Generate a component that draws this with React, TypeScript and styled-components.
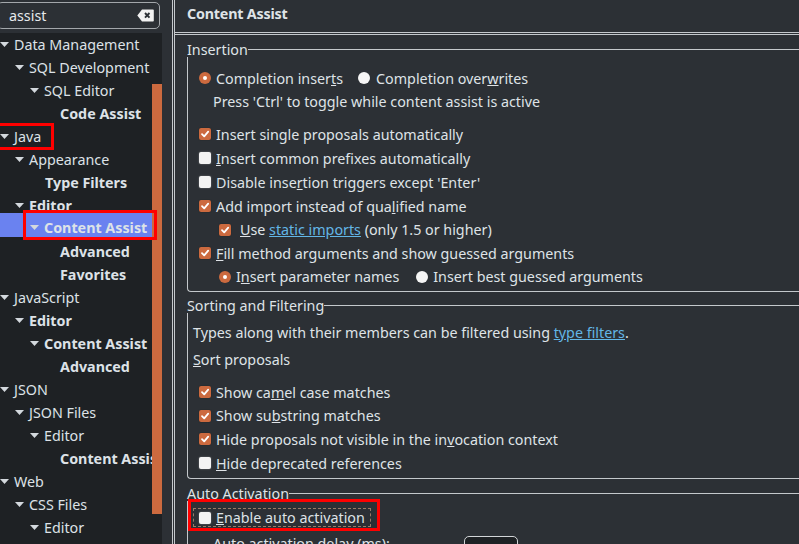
import React from 'react';
import styled, { createGlobalStyle } from 'styled-components';

const Global = createGlobalStyle`
  html, body { margin: 0; padding: 0; background: #2c3035; }
  body {
    font-family: "Noto Sans", "DejaVu Sans", sans-serif;
    font-size: 14.3px;
    color: #dfe3e7;
    overflow: hidden;
  }
  * { box-sizing: border-box; }
`;

const ORANGE = '#cc6a3f';
const LINE = '#c4c8cc';

const Window = styled.div`
  display: flex;
  width: 799px;
  height: 544px;
  overflow: hidden;
  background: #2c3035;
`;

const Sidebar = styled.aside`
  width: 162px;
  flex: none;
  display: flex;
  flex-direction: column;
  overflow: hidden;
`;

const SearchBar = styled.div`
  height: 33px;
  flex: none;
  padding: 2px 2px 4px 0;
  margin-left: -3px;
`;

const SearchBox = styled.div`
  height: 27px;
  border: 1.5px solid #a3a7ab;
  border-radius: 5px;
  display: flex;
  align-items: center;
  padding: 0 5px 1px 11px;
  background: #2c3035;
`;

const SearchText = styled.span`
  flex: 1;
  color: #e6e9ec;
`;

const Tree = styled.div`
  position: relative;
  flex: 1;
  background: #1e2124;
  overflow: hidden;
`;

const TreeRows = styled.div`
  margin-top: -0.5px;
`;

const ScrollThumb = styled.div`
  position: absolute;
  right: 0;
  top: 51px;
  width: 10px;
  height: 430px;
  background: ${ORANGE};
  z-index: 1;
`;

const Row = styled.div<{ $level: number; $selected?: boolean }>`
  height: ${p => (p.$selected ? 24 : 23)}px;
  margin: ${p => (p.$selected ? '-3.5px 0 2.5px' : '0')};
  padding-top: ${p => (p.$selected ? 3 : 0)}px;
  display: flex;
  align-items: center;
  padding-left: ${p => p.$level * 15}px;
  white-space: nowrap;
  background: ${p => (p.$selected ? '#6a82f0' : 'transparent')};
`;

const Mark = styled.span<{ $w: number; $ml: number; $pl: number; $off: number; $tall?: boolean }>`
  display: inline-flex;
  align-items: center;
  align-self: stretch;
  width: ${p => p.$w}px;
  margin-left: ${p => p.$ml}px;
  padding-left: ${p => p.$pl}px;
  margin-top: ${p => (p.$tall ? -3 : 0)}px;
  padding-top: ${p => (p.$tall ? 5 : 0)}px;
  position: relative;
  z-index: 2;
  outline: 3px solid #f00;
  outline-offset: ${p => p.$off}px;
`;

const Twisty = styled.span`
  width: 14px;
  flex: none;
  display: inline-flex;
  align-items: center;
  svg { display: block; }
`;

const Leaf = styled.span`
  width: 15px;
  flex: none;
`;

const TreeLabel = styled.span<{ $bold?: boolean }>`
  font-weight: ${p => (p.$bold ? 700 : 400)};
  color: #dde2e7;
`;

const Main = styled.main`
  flex: 1;
  margin-left: 10px;
  border-left: 3px double ${LINE};
  display: flex;
  flex-direction: column;
  min-width: 0;
`;

const Header = styled.header`
  height: 35px;
  flex: none;
  border-bottom: 3px double ${LINE};
  display: flex;
  align-items: center;
  padding: 0 0 6px 12px;
  font-weight: 700;
  letter-spacing: -0.2px;
`;

const Content = styled.div`
  padding: 6px 0 0 12px;
`;

const Group = styled.section<{ $mt?: number }>`
  margin-top: ${p => p.$mt ?? 0}px;
`;

const GroupTitle = styled.div`
  height: 16px;
  display: flex;
  align-items: center;
`;

const TitleLine = styled.span`
  flex: 1;
  height: 1px;
  background: ${LINE};
  margin-top: 1px;
`;

const GroupBody = styled.div<{ $pt: number; $pb: number }>`
  border-left: 1px solid ${LINE};
  border-bottom: 1px solid ${LINE};
  border-bottom-left-radius: 4px;
  padding: ${p => p.$pt}px 0 ${p => p.$pb}px 0;
`;

const OpenBody = styled.div`
  border-left: 1px solid ${LINE};
`;

const Line = styled.div<{ $h?: number; $indent?: number; $mt?: number }>`
  height: ${p => p.$h ?? 24}px;
  display: flex;
  align-items: center;
  padding-left: ${p => p.$indent ?? 11}px;
  margin-top: ${p => p.$mt ?? 0}px;
  white-space: nowrap;
`;

const Option = styled.span<{ $gap?: number; $mr?: number }>`
  display: inline-flex;
  align-items: center;
  gap: ${p => p.$gap ?? 5}px;
  margin-right: ${p => p.$mr ?? 0}px;
`;

const Box = styled.span<{ $on?: boolean }>`
  width: 12px;
  height: 12px;
  flex: none;
  border-radius: 2px;
  background: ${p => (p.$on ? ORANGE : '#f3f3f3')};
  box-shadow: ${p => (p.$on ? '0 0 1px rgba(0,0,0,.6)' : '0 0 2px rgba(255,255,255,.35)')};
  display: inline-flex;
  align-items: center;
  justify-content: center;
  svg { display: block; }
`;

const Radio = styled.span<{ $on?: boolean }>`
  width: 12px;
  height: 12px;
  flex: none;
  border-radius: 50%;
  background: ${p => (p.$on ? ORANGE : '#f5f5f5')};
  display: inline-flex;
  align-items: center;
  justify-content: center;
  &::after {
    content: '';
    width: 4px;
    height: 4px;
    border-radius: 50%;
    background: ${p => (p.$on ? '#fff' : 'transparent')};
  }
`;

const Link = styled.a`
  color: #63b6e6;
  text-decoration: underline;
`;

const RedFrame = styled.div`
  display: inline-flex;
  border: 3px solid #f00;
  padding: 6px 6px 1px 2px;
  margin-top: -2px;
  position: relative;
  z-index: 2;
`;

const Focus = styled.span`
  display: inline-flex;
  align-items: center;
  gap: 5px;
  height: 19px;
  padding: 0 5px;
  border: 1px dashed #9a7a66;
  white-space: nowrap;
`;

const SpinRow = styled.div`
  height: 24px;
  display: flex;
  align-items: center;
  padding-left: 25px;
  color: #dfe3e7;
`;

const SpinLabel = styled.span`
  width: 251px;
  flex: none;
`;

const Input = styled.span`
  width: 54px;
  height: 28px;
  border: 1px solid #d2d5d8;
  border-radius: 5px;
  background: #1e2124;
  padding: 4px 0 0 8px;
  margin-top: 14px;
`;

const Tri = () => (
  <svg width="9" height="5" viewBox="0 0 9 5">
    <path d="M0 0 H9 L4.5 5 Z" fill="#d3d8dd" />
  </svg>
);

const Check = () => (
  <svg width="10" height="10" viewBox="0 0 10 10">
    <path d="M2 5.2 L4.2 7.4 L8.2 2.6" fill="none" stroke="#fff" strokeWidth="1.8" strokeLinecap="round" strokeLinejoin="round" />
  </svg>
);

const ClearIcon = () => (
  <svg width="17" height="13" viewBox="0 0 17 13">
    <path d="M5 0.5 H16 a0.8 0.8 0 0 1 0.8 0.8 V11.7 a0.8 0.8 0 0 1 -0.8 0.8 H5 L0.3 6.5 Z" fill="#f2f2f2" />
    <path d="M8 4 L12.5 8.7 M12.5 4 L8 8.7" stroke="#2c3035" strokeWidth="1.9" />
  </svg>
);

type TreeNode = {
  label: string;
  level: number;
  exp?: boolean;
  bold?: boolean;
  selected?: boolean;
  flag?: 'java' | 'ca';
};

const treeData: TreeNode[] = [
  { label: 'Data Management', level: 0, exp: true },
  { label: 'SQL Development', level: 1, exp: true },
  { label: 'SQL Editor', level: 2, exp: true },
  { label: 'Code Assist', level: 3, bold: true },
  { label: 'Java', level: 0, exp: true, flag: 'java' },
  { label: 'Appearance', level: 1, exp: true },
  { label: 'Type Filters', level: 2, bold: true },
  { label: 'Editor', level: 1, exp: true, bold: true },
  { label: 'Content Assist', level: 2, exp: true, bold: true, selected: true, flag: 'ca' },
  { label: 'Advanced', level: 3, bold: true },
  { label: 'Favorites', level: 3, bold: true },
  { label: 'JavaScript', level: 0, exp: true },
  { label: 'Editor', level: 1, exp: true, bold: true },
  { label: 'Content Assist', level: 2, exp: true, bold: true },
  { label: 'Advanced', level: 3, bold: true },
  { label: 'JSON', level: 0, exp: true },
  { label: 'JSON Files', level: 1, exp: true },
  { label: 'Editor', level: 2, exp: true },
  { label: 'Content Assist', level: 3, bold: true },
  { label: 'Web', level: 0, exp: true },
  { label: 'CSS Files', level: 1, exp: true },
  { label: 'Editor', level: 2, exp: true },
];

const TreeItem: React.FC<{ n: TreeNode }> = ({ n }) => {
  const inner = (
    <>
      {n.exp ? (
        <Twisty>
          <Tri />
        </Twisty>
      ) : (
        <Leaf />
      )}
      <TreeLabel $bold={n.bold}>{n.label}</TreeLabel>
    </>
  );
  if (n.flag === 'java') {
    return (
      <Row $level={n.level}>
        <Mark $w={58} $ml={-6} $pl={6} $off={-1}>{inner}</Mark>
      </Row>
    );
  }
  if (n.flag === 'ca') {
    return (
      <Row $level={n.level} $selected={n.selected}>
        <Mark $w={128} $ml={-4} $pl={4} $off={0} $tall>{inner}</Mark>
      </Row>
    );
  }
  return <Row $level={n.level} $selected={n.selected}>{inner}</Row>;
};

const CheckLine: React.FC<{ on?: boolean; indent?: number; h?: number; gap?: number; children: React.ReactNode }> = ({ on, indent, h, gap, children }) => (
  <Line $indent={indent} $h={h}>
    <Option $gap={gap}>
      <Box $on={on}>{on && <Check />}</Box>
      <span>{children}</span>
    </Option>
  </Line>
);

export default function App() {
  return (
    <>
      <Global />
      <Window>
        <Sidebar>
          <SearchBar>
            <SearchBox>
              <SearchText>assist</SearchText>
              <ClearIcon />
            </SearchBox>
          </SearchBar>
          <Tree>
            <TreeRows>
              {treeData.map((n, i) => (
                <TreeItem key={i} n={n} />
              ))}
            </TreeRows>
            <ScrollThumb />
          </Tree>
        </Sidebar>
        <Main>
          <Header>Content Assist</Header>
          <Content>
            <Group>
              <GroupTitle>
                <span>Insertion</span>
                <TitleLine />
              </GroupTitle>
              <GroupBody $pt={9} $pb={3}>
                <Line>
                  <Option $mr={15}>
                    <Radio $on />
                    <span>Completion inser<u>t</u>s</span>
                  </Option>
                  <Option $gap={6}>
                    <Radio />
                    <span>Completion over<u>w</u>rites</span>
                  </Option>
                </Line>
                <Line $h={23} $indent={25}>Press 'Ctrl' to toggle while content assist is active</Line>
                <Line $h={9} />
                <CheckLine on>Insert single proposals automatically</CheckLine>
                <CheckLine><u>I</u>nsert common prefixes automatically</CheckLine>
                <CheckLine>Disable inse<u>r</u>tion triggers except 'Enter'</CheckLine>
                <CheckLine on>Add import instead of qua<u>l</u>ified name</CheckLine>
                <CheckLine on indent={31} h={23} gap={9}>
                  <u>U</u>se <Link>static imports</Link> (only 1.5 or higher)
                </CheckLine>
                <CheckLine on><u>F</u>ill method arguments and show guessed arguments</CheckLine>
                <Line $h={23} $indent={31}>
                  <Option $mr={17}>
                    <Radio $on />
                    <span>I<u>n</u>sert parameter names</span>
                  </Option>
                  <Option>
                    <Radio />
                    <span>Insert best guessed arguments</span>
                  </Option>
                </Line>
              </GroupBody>
            </Group>
            <Group $mt={5}>
              <GroupTitle>
                <span>Sorting and Filtering</span>
                <TitleLine />
              </GroupTitle>
              <GroupBody $pt={7} $pb={3}>
                <Line $indent={5}>
                  Types along with their members can be filtered using&nbsp;<Link>type filters</Link>.
                </Line>
                <Line $indent={5} $mt={3}><u>S</u>ort proposals</Line>
                <Line $h={9} />
                <CheckLine on>Show ca<u>m</u>el case matches</CheckLine>
                <CheckLine on h={23}>Show su<u>b</u>string matches</CheckLine>
                <CheckLine on>Hide proposals not visible in the in<u>v</u>ocation context</CheckLine>
                <CheckLine><u>H</u>ide deprecated references</CheckLine>
              </GroupBody>
            </Group>
            <Group $mt={6}>
              <GroupTitle>
                <span>Auto Activation</span>
                <TitleLine />
              </GroupTitle>
              <OpenBody>
                <RedFrame>
                  <Focus>
                    <Box />
                    <span><u>E</u>nable auto activation</span>
                  </Focus>
                </RedFrame>
                <SpinRow>
                  <SpinLabel>Auto activation delay (ms):</SpinLabel>
                  <Input>0</Input>
                </SpinRow>
              </OpenBody>
            </Group>
          </Content>
        </Main>
      </Window>
    </>
  );
}
